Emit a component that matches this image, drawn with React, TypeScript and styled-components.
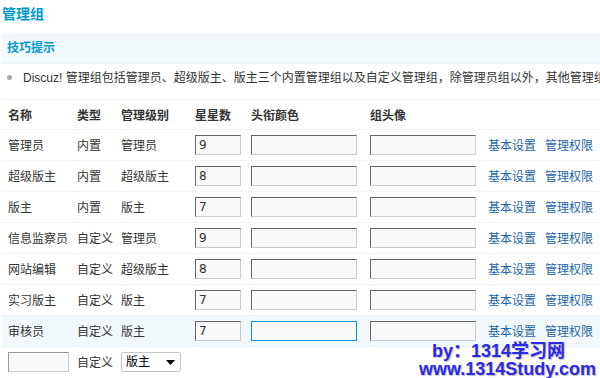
import styled, { createGlobalStyle } from "styled-components";

const GlobalStyle = createGlobalStyle`
  html, body {
    margin: 0;
    padding: 0;
    background: #fff;
    overflow: hidden;
  }
  body {
    font: 12px "Liberation Sans", "Noto Sans CJK SC", sans-serif;
    color: #333;
  }
`;

type Group = {
  name: string;
  type: string;
  level: string;
  stars: number;
  active?: boolean;
};

const groups: Group[] = [
  { name: "管理员", type: "内置", level: "管理员", stars: 9 },
  { name: "超级版主", type: "内置", level: "超级版主", stars: 8 },
  { name: "版主", type: "内置", level: "版主", stars: 7 },
  { name: "信息监察员", type: "自定义", level: "管理员", stars: 9 },
  { name: "网站编辑", type: "自定义", level: "超级版主", stars: 8 },
  { name: "实习版主", type: "自定义", level: "版主", stars: 7 },
  { name: "审核员", type: "自定义", level: "版主", stars: 7, active: true },
];

const App: React.FC = () => {
  return (
    <Page>
      <GlobalStyle />
      <Title>管理组</Title>
      <TipHead>技巧提示</TipHead>
      <TipBody>
        <Bullet />
        <span>
          Discuz! 管理组包括管理员、超级版主、版主三个内置管理组以及自定义管理组，除管理员组以外，其他管理组都可以设置
        </span>
      </TipBody>
      <Table>
        <colgroup>
          <col style={{ width: 75 }} />
          <col style={{ width: 44 }} />
          <col style={{ width: 74 }} />
          <col style={{ width: 56 }} />
          <col style={{ width: 119 }} />
          <col style={{ width: 118 }} />
          <col />
        </colgroup>
        <thead>
          <HeadRow>
            <th>名称</th>
            <th>类型</th>
            <th>管理级别</th>
            <th>星星数</th>
            <th>头衔颜色</th>
            <th>组头像</th>
            <th />
          </HeadRow>
        </thead>
        <tbody>
          {groups.map((g) => (
            <Row key={g.name} $hover={g.active}>
              <td>{g.name}</td>
              <td>{g.type}</td>
              <td>{g.level}</td>
              <td>
                <TextInput $w={46} defaultValue={String(g.stars)} />
              </td>
              <td>
                <TextInput $w={106} $focus={g.active} />
              </td>
              <td>
                <TextInput $w={106} />
              </td>
              <td>
                <Links>
                  <a href="#">基本设置</a>
                  <a href="#">管理权限</a>
                </Links>
              </td>
            </Row>
          ))}
          <Row>
            <td>
              <TextInput $w={61} $soft />
            </td>
            <td>自定义</td>
            <td colSpan={5}>
              <SelectWrap>
                <Select defaultValue="版主">
                  <option>管理员</option>
                  <option>超级版主</option>
                  <option>版主</option>
                </Select>
                <Arrow width="9" height="5" viewBox="0 0 9 5">
                  <path d="M0 0h9L4.5 5z" fill="#000" />
                </Arrow>
              </SelectWrap>
            </td>
          </Row>
        </tbody>
      </Table>
      <Watermark>
        <span>by：1314学习网</span>
        <span>www.1314Study.com</span>
      </Watermark>
    </Page>
  );
};

export default App;

const Page = styled.div`
  position: relative;
  width: 600px;
  height: 378px;
  padding-left: 2px;
  box-sizing: border-box;
  overflow: hidden;
`;

const Title = styled.h3`
  margin: 0;
  height: 33px;
  line-height: 28px;
  font-size: 14px;
  font-weight: bold;
  color: #09c;
  white-space: nowrap;
`;

const TipHead = styled.div`
  height: 30px;
  line-height: 30px;
  padding-left: 5px;
  background: #f2f9fd;
  border-bottom: 1px dotted #deeffb;
  font-size: 12px;
  font-weight: bold;
  color: #09c;
`;

const TipBody = styled.div`
  display: flex;
  align-items: flex-start;
  gap: 11px;
  height: 35px;
  line-height: 28px;
  padding-left: 5px;
  border-bottom: 1px dotted #deeffb;
  white-space: nowrap;
  color: #333;
`;

const Bullet = styled.i`
  flex: none;
  width: 5px;
  height: 5px;
  margin-top: 11px;
  border-radius: 50%;
  background: #aaa;
`;

const Table = styled.table`
  width: 598px;
  border-collapse: collapse;
  table-layout: fixed;
  white-space: nowrap;
  td,
  th {
    padding: 0;
    text-align: left;
    vertical-align: middle;
  }
  td:first-child,
  th:first-child {
    padding-left: 6px;
  }
`;

const HeadRow = styled.tr`
  height: 29px;
  th {
    font-weight: bold;
    color: #333;
  }
`;

const Row = styled.tr<{ $hover?: boolean }>`
  height: 31px;
  border-top: 1px dotted #deeffb;
  background: ${(p) => (p.$hover ? "#f2f9fd" : "transparent")};
`;

const TextInput = styled.input<{ $w: number; $focus?: boolean; $soft?: boolean }>`
  display: block;
  box-sizing: border-box;
  width: ${(p) => p.$w}px;
  height: 20px;
  margin: 0;
  padding: 0 3px;
  background: #f9f9f9;
  border: 1px solid;
  border-color: ${(p) =>
    p.$focus ? "#09c" : p.$soft ? "#999 #ccc #ccc #999" : "#666 #ccc #ccc #666"};
  font: 12px "DejaVu Sans", "Liberation Sans", sans-serif;
  color: #333;
  outline: none;
`;

const Links = styled.div`
  display: flex;
  gap: 9px;
  a {
    color: #2366a8;
    text-decoration: none;
  }
`;

const SelectWrap = styled.div`
  position: relative;
  width: 60px;
  height: 20px;
`;

const Select = styled.select`
  appearance: none;
  width: 60px;
  height: 20px;
  margin: 0;
  padding: 0 0 0 4px;
  border: 1px solid #c8c8c8;
  border-radius: 2px;
  background: #fff;
  font: 12px "Liberation Sans", "Noto Sans CJK SC", sans-serif;
  color: #000;
`;

const Arrow = styled.svg`
  position: absolute;
  right: 6px;
  top: 8px;
  pointer-events: none;
`;

const Watermark = styled.div`
  position: absolute;
  right: 4px;
  bottom: 0;
  display: flex;
  flex-direction: column;
  align-items: flex-end;
  font: bold 18px/18px "Liberation Sans", "Noto Sans CJK SC", sans-serif;
  color: #2a2ae8;
  text-shadow: 1px 1px 1px #b8b8c8;
  span:first-child {
    margin-right: 31px;
  }
`;
